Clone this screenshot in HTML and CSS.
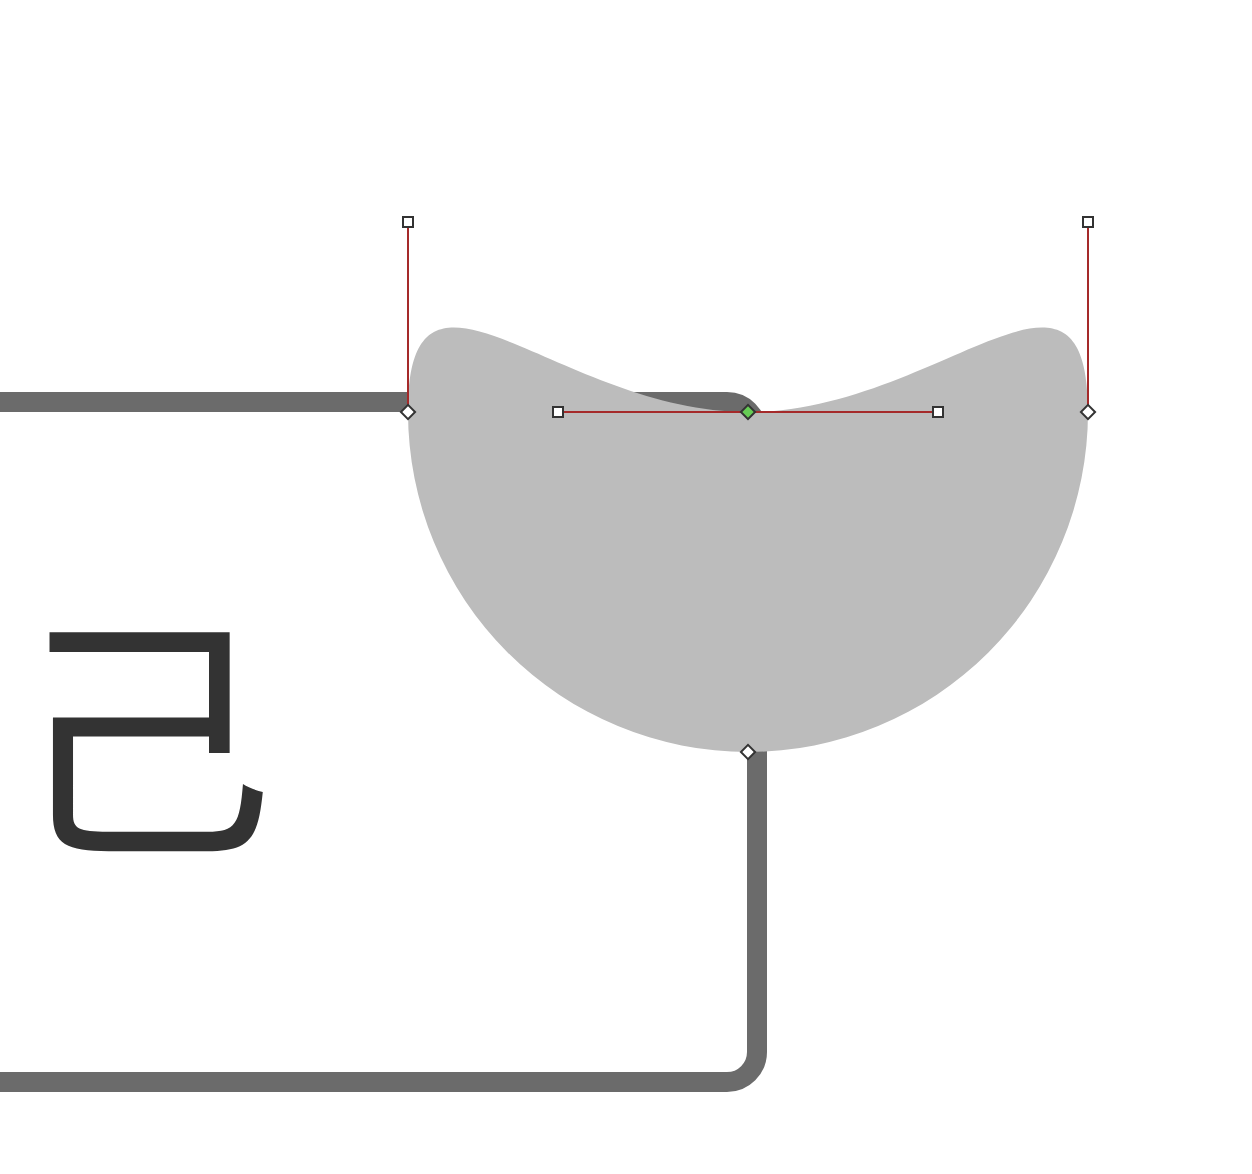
FILE: index.html
```html
<!DOCTYPE html>
<html lang="zh">
<head>
  <meta charset="UTF-8">
  <title>Path editor</title>
  <link rel="stylesheet" href="styles.css">
</head>
<body>

<svg class="canvas" width="1252" height="1174" viewBox="0 0 1252 1174">
  <!-- box under the shape -->
  <rect class="box" x="-60" y="402" width="817" height="680" rx="30" ry="30"/>
  <text class="glyph" x="13" y="836">己</text>

  <!-- edited shape -->
  <path class="shape" d="M408 412 C408 222 558 412 748 412 C938 412 1088 222 1088 412 A340 340 0 0 1 748 752 A340 340 0 0 1 408 412 Z"/>

  <!-- handle lines -->
  <line class="handle-line" x1="408" y1="222" x2="408" y2="412"/>
  <line class="handle-line" x1="558" y1="412" x2="938" y2="412"/>
  <line class="handle-line" x1="1088" y1="222" x2="1088" y2="412"/>

  <!-- control points -->
  <rect class="ctrl" x="403" y="217" width="10" height="10"/>
  <rect class="ctrl" x="553" y="407" width="10" height="10"/>
  <rect class="ctrl" x="933" y="407" width="10" height="10"/>
  <rect class="ctrl" x="1083" y="217" width="10" height="10"/>

  <!-- anchors -->
  <rect class="anchor" x="403" y="407" width="10" height="10" transform="rotate(45 408 412)"/>
  <rect class="anchor selected" x="743" y="407" width="10" height="10" transform="rotate(45 748 412)"/>
  <rect class="anchor" x="1083" y="407" width="10" height="10" transform="rotate(45 1088 412)"/>
  <rect class="anchor" x="743" y="747" width="10" height="10" transform="rotate(45 748 752)"/>
</svg>

</body>
</html>
```

FILE: styles.css
```css
body {
  margin: 0;
  background: #ffffff;
  overflow: hidden;
}

.canvas {
  display: block;
}

.box {
  fill: #ffffff;
  stroke: #6b6b6b;
  stroke-width: 20;
}

.glyph {
  font-family: "Noto Sans CJK JP", "Noto Sans CJK SC", sans-serif;
  font-size: 261px;
  fill: #333333;
}

.shape {
  fill: #bcbcbc;
}

.handle-line {
  stroke: #a52a2a;
  stroke-width: 2;
}

.ctrl {
  fill: #ffffff;
  stroke: #333333;
  stroke-width: 2;
}

.anchor {
  fill: #ffffff;
  stroke: #333333;
  stroke-width: 2;
}

.anchor.selected {
  fill: #66cc55;
}
```
